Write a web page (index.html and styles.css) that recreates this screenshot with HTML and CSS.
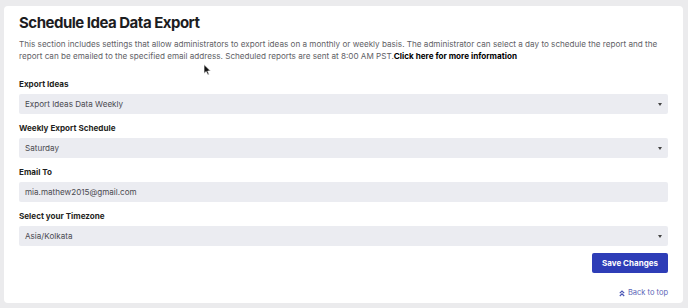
FILE: index.html
```html
<!DOCTYPE html>
<html>
<head>
<meta charset="utf-8">
<link rel="stylesheet" href="styles.css">
</head>
<body>
<div class="card">
  <h1 class="title">Schedule Idea Data Export</h1>
  <p class="desc">This section includes settings that allow administrators to export ideas on a monthly or weekly basis. The administrator can select a day to schedule the report and the report can be emailed to the specified email address. Scheduled reports are sent at 8:00 AM PST.<a class="more" href="#">Click here for more information</a></p>

  <div class="field">
    <div class="label">Export Ideas</div>
    <div class="control select"><span>Export Ideas Data Weekly</span><i class="caret"></i></div>
  </div>
  <div class="field">
    <div class="label">Weekly Export Schedule</div>
    <div class="control select"><span>Saturday</span><i class="caret"></i></div>
  </div>
  <div class="field">
    <div class="label">Email To</div>
    <div class="control"><span>mia.mathew2015@gmail.com</span></div>
  </div>
  <div class="field">
    <div class="label">Select your Timezone</div>
    <div class="control select"><span>Asia/Kolkata</span><i class="caret"></i></div>
  </div>

  <div class="actions">
    <button class="save">Save Changes</button>
  </div>
  <div class="totop">
    <a href="#" class="totop-link"><svg width="6" height="7" viewBox="0 0 6 7"><path d="M0.8 3.2 L3 1 L5.2 3.2 M0.8 6 L3 3.8 L5.2 6" fill="none" stroke="#4a55b5" stroke-width="1.2"/></svg>Back to top</a>
  </div>
  <svg class="cursor" width="9" height="12" viewBox="0 0 9 12"><path d="M1 0.5 L1 9.5 L3.2 7.5 L4.8 11 L6.2 10.4 L4.7 7 L7.6 7 Z" fill="#111" stroke="#fff" stroke-width="0.7"/></svg>
</div>
</body>
</html>
```

FILE: styles.css
```css
* { box-sizing: border-box; }
html, body { margin: 0; padding: 0; }
body {
  background: #ebebed;
  font-family: Inter, "Liberation Sans", Arial, sans-serif;
  width: 688px;
  height: 308px;
  overflow: hidden;
  padding: 6px 5px 0 4px;
}
.card {
  position: relative;
  background: #fff;
  border-radius: 4px;
  height: 297px;
  padding: 8px 15px 0 15px;
}
.title {
  margin: 0;
  font-size: 15px;
  line-height: 18px;
  font-weight: 700;
  letter-spacing: -0.5px;
  color: #1d1d1f;
}
.desc {
  margin: 6px 0 0 0;
  font-size: 8.15px;
  line-height: 12px;
  letter-spacing: 0;
  color: #616166;
}
.more {
  color: #000;
  font-weight: 700;
  text-decoration: none;
}
.field { margin-top: 8px; }
.field:first-of-type { margin-top: 16px; }
.label {
  font-size: 8.1px;
  line-height: 12px;
  font-weight: 700;
  color: #1f1f22;
  margin-bottom: 4px;
}
.control {
  height: 20px;
  background: #ebecf1;
  border-radius: 2px;
  display: flex;
  align-items: center;
  justify-content: space-between;
  padding: 0 6px 0 6px;
  font-size: 8.1px;
  color: #4a4a50;
}
.caret {
  width: 0; height: 0;
  border-left: 2.5px solid transparent;
  border-right: 2.5px solid transparent;
  border-top: 3px solid #444;
}
.actions {
  display: flex;
  justify-content: flex-end;
  margin-top: 7px;
}
.save {
  width: 76px;
  height: 20px;
  background: #2e3db7;
  color: #fff;
  border: none;
  border-radius: 2px;
  font-family: inherit;
  font-size: 8px;
  font-weight: 700;
  padding: 0;
}
.totop {
  display: flex;
  justify-content: flex-end;
  margin-top: 14px;
}
.totop-link {
  display: flex;
  align-items: center;
  gap: 3px;
  font-size: 7.5px;
  line-height: 12px;
  color: #5c66b8;
  text-decoration: none;
}
.cursor {
  position: absolute;
  left: 199px;
  top: 58px;
}
```
